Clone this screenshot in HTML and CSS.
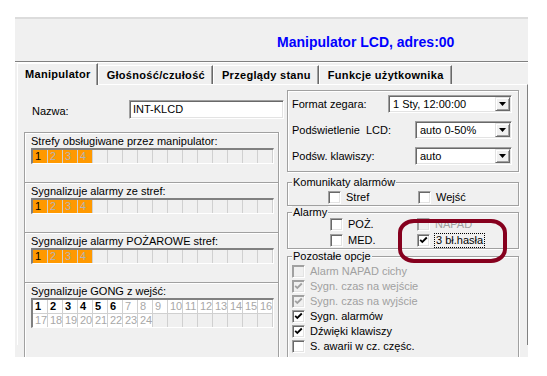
FILE: index.html
```html
<!DOCTYPE html>
<html lang="pl">
<head>
  <meta charset="UTF-8" />
  <title>Manipulator LCD</title>
  <link rel="stylesheet" href="styles.css">
</head>
<body>
  <div class="window">
    <div class="header">
      <h1 class="title">Manipulator LCD, adres:00</h1>
    </div>

    <div class="tabs">
      <div class="tab active">Manipulator</div>
      <div class="tab">Głośność/czułość</div>
      <div class="tab">Przeglądy stanu</div>
      <div class="tab">Funkcje użytkownika</div>
    </div>

    <div class="page">
      <!-- left column: name + zone grids -->
      <div class="col-left">
        <div class="name-row">
          <span class="name-label">Nazwa:</span>
          <div class="edit">INT-KLCD</div>
        </div>

        <div class="zone-box">
          <div class="box-label">Strefy obsługiwane przez manipulator:</div>
          <div class="grid">
            <span class="cell on">1</span><span class="cell on off">2</span><span class="cell on off">3</span><span class="cell on off">4</span>
            <span class="cell"></span><span class="cell"></span><span class="cell"></span><span class="cell"></span>
            <span class="cell"></span><span class="cell"></span><span class="cell"></span><span class="cell"></span>
            <span class="cell"></span><span class="cell"></span><span class="cell"></span><span class="cell"></span>
          </div>
        </div>

        <div class="zone-box">
          <div class="box-label">Sygnalizuje alarmy ze stref:</div>
          <div class="grid">
            <span class="cell on">1</span><span class="cell on off">2</span><span class="cell on off">3</span><span class="cell on off">4</span>
            <span class="cell"></span><span class="cell"></span><span class="cell"></span><span class="cell"></span>
            <span class="cell"></span><span class="cell"></span><span class="cell"></span><span class="cell"></span>
            <span class="cell"></span><span class="cell"></span><span class="cell"></span><span class="cell"></span>
          </div>
        </div>

        <div class="zone-box">
          <div class="box-label">Sygnalizuje alarmy POŻAROWE stref:</div>
          <div class="grid">
            <span class="cell on">1</span><span class="cell on off">2</span><span class="cell on off">3</span><span class="cell on off">4</span>
            <span class="cell"></span><span class="cell"></span><span class="cell"></span><span class="cell"></span>
            <span class="cell"></span><span class="cell"></span><span class="cell"></span><span class="cell"></span>
            <span class="cell"></span><span class="cell"></span><span class="cell"></span><span class="cell"></span>
          </div>
        </div>

        <div class="zone-box last">
          <div class="box-label">Sygnalizuje GONG z wejść:</div>
          <div class="grid gong">
            <span class="cell w b">1</span><span class="cell w b">2</span><span class="cell w b">3</span><span class="cell w b">4</span>
            <span class="cell w b">5</span><span class="cell w b">6</span><span class="cell w off">7</span><span class="cell w off">8</span>
            <span class="cell w off">9</span><span class="cell w off">10</span><span class="cell w off">11</span><span class="cell w off">12</span>
            <span class="cell w off">13</span><span class="cell w off">14</span><span class="cell w off">15</span><span class="cell w off">16</span>
            <span class="cell w off">17</span><span class="cell w off">18</span><span class="cell w off">19</span><span class="cell w off">20</span>
            <span class="cell w off">21</span><span class="cell w off">22</span><span class="cell w off">23</span><span class="cell w off">24</span>
            <span class="cell"></span><span class="cell"></span><span class="cell"></span><span class="cell"></span>
            <span class="cell"></span><span class="cell"></span><span class="cell"></span><span class="cell"></span>
          </div>
        </div>
      </div>

      <!-- right column: settings + option groups -->
      <div class="col-right">
        <div class="group settings">
          <div class="field">
            <span>Format zegara:</span>
            <div class="combo wide"><span class="combo-text">1 Sty, 12:00:00</span><span class="combo-btn"><svg width="7" height="4" viewBox="0 0 7 4"><polygon points="0,0 7,0 3.5,4" fill="#000"/></svg></span></div>
          </div>
          <div class="field">
            <span>Podświetlenie&nbsp; LCD:</span>
            <div class="combo"><span class="combo-text">auto 0-50%</span><span class="combo-btn"><svg width="7" height="4" viewBox="0 0 7 4"><polygon points="0,0 7,0 3.5,4" fill="#000"/></svg></span></div>
          </div>
          <div class="field">
            <span>Podśw. klawiszy:</span>
            <div class="combo"><span class="combo-text">auto</span><span class="combo-btn"><svg width="7" height="4" viewBox="0 0 7 4"><polygon points="0,0 7,0 3.5,4" fill="#000"/></svg></span></div>
          </div>
        </div>

        <div class="group comms">
          <span class="group-title">Komunikaty alarmów</span>
          <label class="check comm-item"><span class="cb"></span>Stref</label>
          <label class="check"><span class="cb"></span>Wejść</label>
        </div>

        <div class="group alarms">
          <span class="group-title">Alarmy</span>
          <label class="check"><span class="cb"></span>POŻ.</label>
          <label class="check dis"><span class="cb"></span>NAPAD</label>
          <label class="check"><span class="cb"></span>MED.</label>
          <label class="check"><span class="cb"><svg width="9" height="9" viewBox="0 0 9 9"><polyline points="1.2,3.8 3.3,6 7.8,1.5" fill="none" stroke="#000" stroke-width="1.8"/></svg></span><span class="focus">3 bł.hasła</span></label>
        </div>

        <div class="group options">
          <span class="group-title">Pozostałe opcje</span>
          <label class="check dis"><span class="cb"></span>Alarm NAPAD cichy</label>
          <label class="check dis"><span class="cb"><svg width="9" height="9" viewBox="0 0 9 9"><polyline points="1.2,3.8 3.3,6 7.8,1.5" fill="none" stroke="#a0a0a0" stroke-width="1.8"/></svg></span>Sygn. czas na wejście</label>
          <label class="check dis"><span class="cb"><svg width="9" height="9" viewBox="0 0 9 9"><polyline points="1.2,3.8 3.3,6 7.8,1.5" fill="none" stroke="#a0a0a0" stroke-width="1.8"/></svg></span>Sygn. czas na wyjście</label>
          <label class="check"><span class="cb"><svg width="9" height="9" viewBox="0 0 9 9"><polyline points="1.2,3.8 3.3,6 7.8,1.5" fill="none" stroke="#000" stroke-width="1.8"/></svg></span>Sygn. alarmów</label>
          <label class="check"><span class="cb"><svg width="9" height="9" viewBox="0 0 9 9"><polyline points="1.2,3.8 3.3,6 7.8,1.5" fill="none" stroke="#000" stroke-width="1.8"/></svg></span>Dźwięki klawiszy</label>
          <label class="check"><span class="cb"></span>S. awarii w cz. częśc.</label>
        </div>
      </div>
    </div>

    <!-- hand-drawn highlight over the options -->
    <div class="marker"></div>
  </div>
</body>
</html>
```

FILE: styles.css
```css
body {
  margin: 0;
  background: #fff;
  font-family: "Liberation Sans", Arial, sans-serif;
  font-size: 11px;
  color: #000;
}
.window {
  position: relative;
  margin: 17px 0 0 15px;
  width: 513px;
  height: 340px;
  box-sizing: border-box;
  background: #f0f0f0;
  border-top: 2px solid #dcdcdc;
  overflow: hidden;
}
.header {
  height: 43px;
  box-sizing: border-box;
  padding: 15px 0 0 262px;
  border-bottom: 1px solid #808080;
  box-shadow: 0 1px 0 #fff;
}
.title {
  margin: 0;
  font-size: 14px;
  line-height: 16px;
  font-weight: bold;
  color: #0000ff;
}
.tabs {
  display: flex;
  align-items: flex-end;
  height: 22px;
  padding-left: 2px;
}
.tab {
  height: 19px;
  box-sizing: border-box;
  padding: 3px 7px 0 8px;
  line-height: 13px;
  font-weight: bold;
  letter-spacing: 0.3px;
  white-space: nowrap;
  border-top: 1px solid #fff;
  border-left: 1px solid #fff;
  border-right: 1px solid #696969;
  box-shadow: inset -1px 0 0 #a0a0a0;
}
.tab.active {
  position: relative;
  z-index: 1;
  height: 22px;
  margin-bottom: -1px;
  padding: 4px 6px 0 7px;
  background: #f0f0f0;
}
.page {
  display: flex;
  height: 260px;
  margin-left: 2px;
  border-top: 1px solid #fff;
  border-left: 1px solid #fff;
  border-right: 1px solid #808080;
}
.col-left {
  width: 260px;
  padding: 15px 0 0 6px;
}
.name-row {
  display: flex;
  align-items: center;
  height: 19px;
  margin-bottom: 13px;
}
.name-label {
  width: 97px;
  padding: 2px 0 0 8px;
}
.edit {
  width: 155px;
  height: 19px;
  box-sizing: border-box;
  padding: 2px 3px;
  line-height: 13px;
  background: #fff;
  border: 1px solid;
  border-color: #a0a0a0 #fff #fff #a0a0a0;
  box-shadow: inset 1px 1px 0 #696969, inset -1px -1px 0 #e3e3e3;
}
.zone-box {
  width: 255px;
  height: 50px;
  box-sizing: border-box;
  padding: 2px 0 0 6px;
  border: 1px solid #a0a0a0;
  border-bottom: 0;
  box-shadow: inset 1px 1px 0 #fff, 1px 0 0 #fff;
}
.zone-box.last {
  height: 80px;
}
.box-label {
  line-height: 13px;
}
.grid {
  display: grid;
  grid-template-columns: repeat(16, 15px);
  width: max-content;
  border-top: 2px solid #808080;
  border-left: 2px solid #808080;
  border-bottom: 1px solid #fff;
  border-right: 1px solid #fff;
}
.cell {
  height: 13px;
  box-sizing: border-box;
  padding-left: 2px;
  line-height: 13px;
  border-right: 1px solid #d0d0d0;
}
.cell.on {
  background: #ff9900;
}
.cell.off {
  color: #a8a8a8;
}
.cell.on.off {
  color: #b4b4b4;
}
.cell.w {
  background: #fff;
}
.cell.b {
  font-weight: bold;
}
.gong .cell {
  height: 14px;
  border-bottom: 1px solid #d0d0d0;
}
.gong .cell:nth-child(n+17) {
  height: 13px;
  border-bottom: 0;
}
.col-right {
  width: 232px;
  margin-left: 3px;
  padding-top: 5px;
}
.group {
  position: relative;
  box-sizing: border-box;
  border: 1px solid #a0a0a0;
  box-shadow: inset 1px 1px 0 #fff, 1px 1px 0 #fff;
}
.group-title {
  position: absolute;
  top: -7px;
  left: 4px;
  padding: 0 1px;
  line-height: 13px;
  background: #f0f0f0;
}
.settings {
  height: 82px;
  padding: 4px 6px 0 4px;
}
.field {
  display: flex;
  align-items: center;
  justify-content: space-between;
  height: 18px;
  margin-bottom: 8px;
}
.combo {
  display: flex;
  width: 97px;
  height: 18px;
  box-sizing: border-box;
  padding: 1px;
  background: #fff;
  border: 1px solid;
  border-color: #a0a0a0 #fff #fff #a0a0a0;
  box-shadow: inset 1px 1px 0 #696969, inset -1px -1px 0 #e3e3e3;
}
.combo.wide {
  width: 124px;
}
.combo-text {
  flex: 1;
  padding-left: 3px;
  line-height: 14px;
}
.combo-btn {
  display: flex;
  align-items: center;
  justify-content: center;
  width: 15px;
  box-sizing: border-box;
  background: #f0f0f0;
  border: 1px solid;
  border-color: #e3e3e3 #696969 #696969 #e3e3e3;
  box-shadow: inset 1px 1px 0 #fff, inset -1px -1px 0 #a0a0a0;
}
.check {
  display: flex;
  align-items: center;
  gap: 5px;
  height: 13px;
  line-height: 13px;
  white-space: nowrap;
}
.check.dis {
  color: #a0a0a0;
}
.cb {
  display: flex;
  align-items: center;
  justify-content: center;
  width: 13px;
  height: 13px;
  box-sizing: border-box;
  background: #fff;
  border: 1px solid;
  border-color: #a0a0a0 #fff #fff #a0a0a0;
  box-shadow: inset 1px 1px 0 #696969, inset -1px -1px 0 #e3e3e3;
}
.check.dis .cb {
  background: #f0f0f0;
  box-shadow: inset 1px 1px 0 #a0a0a0, inset -1px -1px 0 #e3e3e3;
}
.comms {
  display: flex;
  height: 24px;
  margin-top: 10px;
  padding: 8px 0 0 40px;
}
.comm-item {
  width: 90px;
}
.alarms {
  display: grid;
  grid-template-columns: 87px auto;
  row-gap: 1px;
  height: 37px;
  margin-top: 6px;
  padding: 5px 0 0 42px;
}
.focus {
  padding: 0 1px;
  outline: 1px dotted #000;
}
.options {
  display: flex;
  flex-direction: column;
  gap: 2px;
  height: 120px;
  margin-top: 7px;
  padding: 8px 0 0 4px;
}
.marker {
  position: absolute;
  left: 383px;
  top: 200px;
  width: 109px;
  height: 44px;
  box-sizing: border-box;
  border: 4px solid #86001e;
  border-radius: 16px / 14px;
}
```
